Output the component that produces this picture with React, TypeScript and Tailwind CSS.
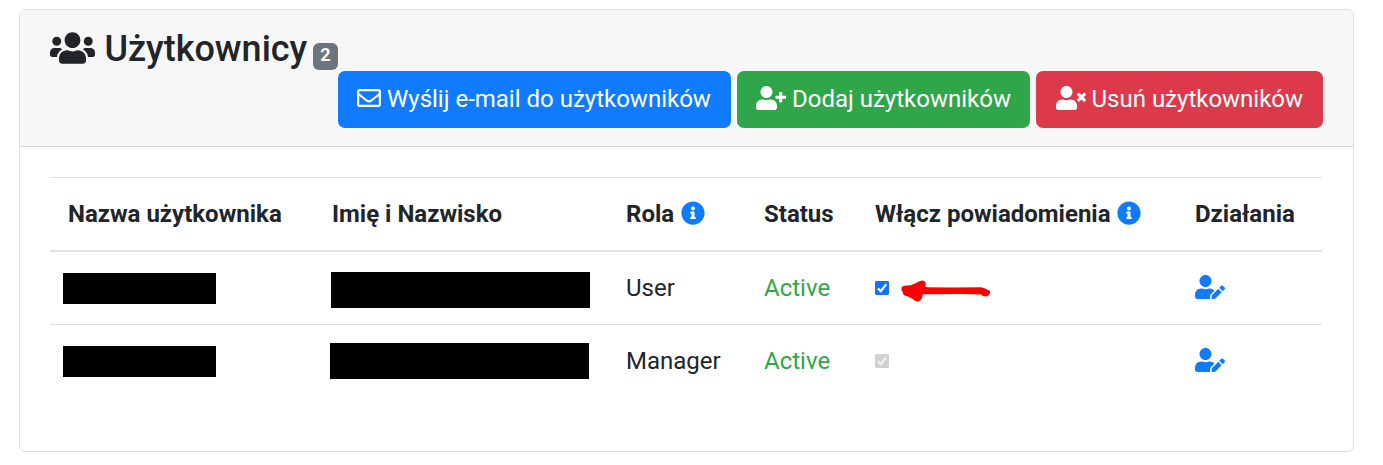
import type { ReactNode } from "react";
import {
  FaInfoCircle,
  FaRegEnvelope,
  FaUserEdit,
  FaUserPlus,
  FaUserTimes,
  FaUsers,
} from "react-icons/fa";

function ActionButton({ color, icon, label }: { color: string; icon: ReactNode; label: string }) {
  return (
    <button
      className={`flex h-[57px] items-center rounded-[7px] pb-[2px] text-[24px] leading-9 whitespace-nowrap text-white ${color}`}
    >
      {icon}
      <span className="ml-[6px]">{label}</span>
    </button>
  );
}

function CheckMark({ disabled }: { disabled?: boolean }) {
  return (
    <svg
      viewBox="0 0 14 14"
      className="h-[14px] w-[14px] shrink-0"
      role="checkbox"
      aria-checked="true"
      aria-disabled={disabled}
    >
      <rect width="14" height="14" rx="1.4" fill={disabled ? "#d1d1d1" : "#0f75ff"} />
      <path
        d="M2.9 7.4 L5.7 10.2 L11.3 3.2"
        fill="none"
        stroke={disabled ? "#f0f0f0" : "#ffffff"}
        strokeWidth="2.2"
      />
    </svg>
  );
}

function RedArrow() {
  return (
    <svg viewBox="0 0 90 22" className="mt-[5px] ml-[11.5px] h-[22px] w-[90px] shrink-0" aria-hidden="true">
      <path
        d="M0.3 8.7 Q0.4 6.3 3 5.7 L9.5 5.3 L14 3.6 L18.5 1.2 Q21.5 -0.1 23.8 1.4 Q26 3.8 24 6.4 L26.5 7.2 L50 7.4 L80 7.2 Q83 7.6 86 9.4 Q89.4 10.2 89 13 Q88.4 16 85 16.4 Q81.5 16.4 80 14.4 L60 14 L35 14.2 L22.2 14.2 L21.2 16 Q21 20.2 17.6 21.4 Q14.5 21.8 12.5 19.4 L7 16.4 L3.6 15.6 Q1.7 14.6 2 12.3 Q0.2 10.9 0.3 8.7 Z"
        fill="#ff0000"
      />
    </svg>
  );
}

const th = "h-[73px] border-t border-[#dee2e6] pl-[18px] text-left font-bold";
const td = "pl-[18px]";

export default function App() {
  return (
    <div className="h-[465px] bg-white pt-[9px] pl-[19px] font-['Roboto',sans-serif] text-[24px] leading-9 text-[#212529]">
      <div className="h-[443px] w-[1335px] overflow-hidden rounded-[6px] border border-[#dfdfdf] bg-white">
        <header className="h-[137px] border-b border-[#d6d6d6] bg-[#f7f7f7] px-[30px] pt-[17px]">
          <h1 className="flex h-[44px] items-center text-[36px] leading-[43px] font-medium">
            <FaUsers className="-mt-[3px] h-9 w-[45px]" />
            <span className="ml-[9.4px]">Użytkownicy</span>
            <span className="mt-[15px] -mr-2 ml-[5.6px] flex h-[27px] w-[25px] items-center justify-center rounded-[6px] bg-[#6c757d] pb-[4px] text-[18px] leading-[18px] font-bold text-white">
              2
            </span>
          </h1>
          <div className="flex justify-end gap-[6px]">
            <ActionButton
              color="bg-[#107bff] w-[393px] pl-[19px]"
              icon={<FaRegEnvelope className="-mt-[2px] h-6 w-6" />}
              label="Wyślij e-mail do użytkowników"
            />
            <ActionButton
              color="bg-[#2fa64a] w-[293px] pl-[19px]"
              icon={<FaUserPlus className="-mt-[2px] h-6 w-[30px]" />}
              label="Dodaj użytkowników"
            />
            <ActionButton
              color="bg-[#dc3a4a] w-[287px] pl-[19.5px]"
              icon={<FaUserTimes className="-mt-[2px] h-6 w-[30px]" />}
              label="Usuń użytkowników"
            />
          </div>
        </header>

        <main className="px-[30px] pt-[30px]">
          <table className="w-[1272px] table-fixed border-separate border-spacing-0">
            <colgroup>
              <col className="w-[264px]" />
              <col className="w-[294px]" />
              <col className="w-[138px]" />
              <col className="w-[111px]" />
              <col className="w-[320px]" />
              <col className="w-[145px]" />
            </colgroup>
            <thead>
              <tr className="whitespace-nowrap">
                <th className={th}>Nazwa użytkownika</th>
                <th className={th}>Imię i Nazwisko</th>
                <th className={th}>
                  <span className="flex items-center gap-[6.5px]">
                    Rola <FaInfoCircle className="-mt-[2px] h-6 w-6 text-[#107bff]" />
                  </span>
                </th>
                <th className={th}>Status</th>
                <th className={th}>
                  <span className="flex items-center gap-[6.5px]">
                    Włącz powiadomienia <FaInfoCircle className="-mt-[2px] h-6 w-6 text-[#107bff]" />
                  </span>
                </th>
                <th className={th}>Działania</th>
              </tr>
            </thead>
            <tbody>
              <tr className="h-[74px] *:border-t-2 *:border-[#dee2e6]">
                <td className="pl-[13px]">
                  <div className="h-[31px] w-[153px] bg-black" />
                </td>
                <td className="pl-[17px]">
                  <div className="mt-[3px] h-9 w-[259px] bg-black" />
                </td>
                <td className={td}>User</td>
                <td className={`${td} text-[#2fa64a]`}>Active</td>
                <td className={td}>
                  <div className="flex h-9 items-center">
                    <CheckMark />
                    <RedArrow />
                  </div>
                </td>
                <td className={`${td} pb-[2px]`}>
                  <FaUserEdit className="h-6 w-[30px] text-[#107bff]" />
                </td>
              </tr>
              <tr className="h-[73px] *:border-t *:border-[#dee2e6]">
                <td className="pl-[13px]">
                  <div className="h-[31px] w-[153px] bg-black" />
                </td>
                <td className="pl-4">
                  <div className="h-9 w-[259px] bg-black" />
                </td>
                <td className={td}>Manager</td>
                <td className={`${td} text-[#2fa64a]`}>Active</td>
                <td className={td}>
                  <div className="flex h-9 items-center">
                    <CheckMark disabled />
                  </div>
                </td>
                <td className={`${td} pb-[2px]`}>
                  <FaUserEdit className="h-6 w-[30px] text-[#107bff]" />
                </td>
              </tr>
            </tbody>
          </table>
        </main>
      </div>
    </div>
  );
}
